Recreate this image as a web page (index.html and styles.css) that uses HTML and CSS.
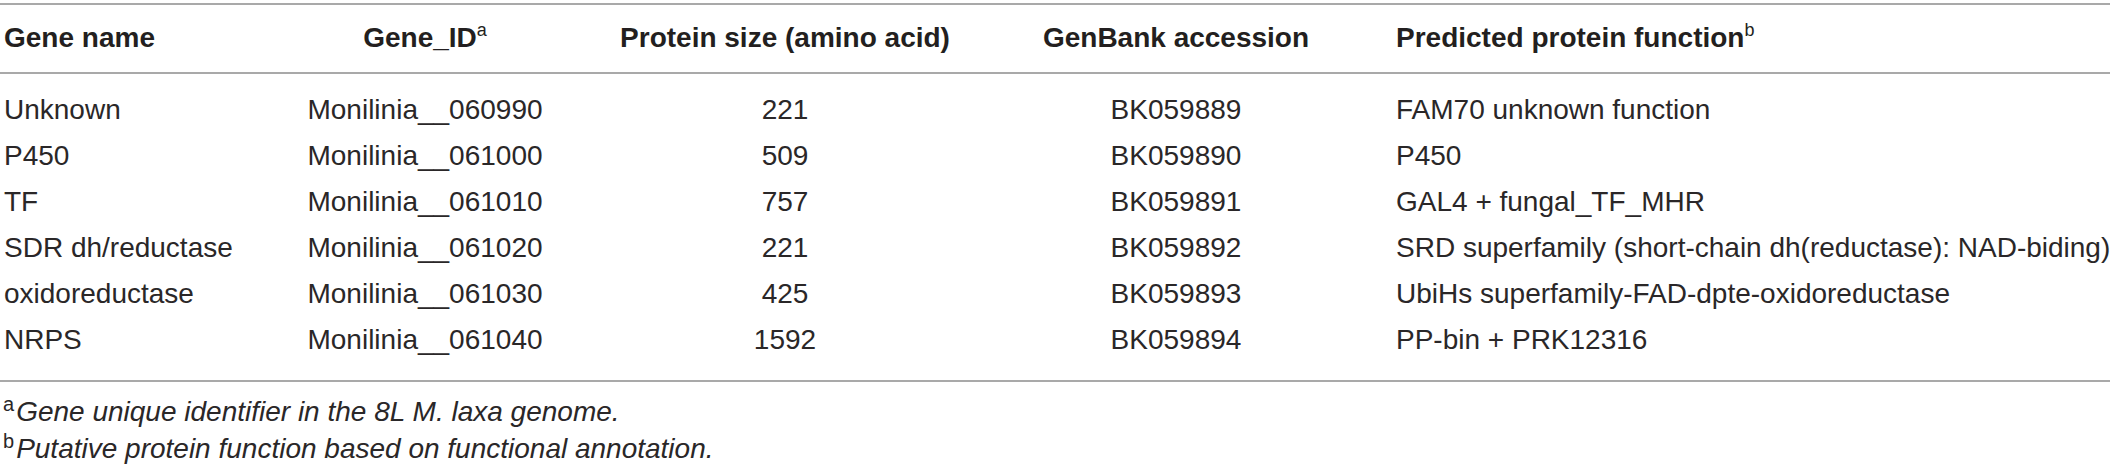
FILE: index.html
```html
<!DOCTYPE html>
<html>
<head>
<meta charset="utf-8">
<link rel="stylesheet" href="styles.css">
</head>
<body>
<div class="wrap">
<table class="gtable">
  <colgroup>
    <col class="c1"><col class="c2"><col class="c3"><col class="c4"><col class="c5">
  </colgroup>
  <thead>
    <tr>
      <th class="left">Gene name</th>
      <th>Gene_ID<sup>a</sup></th>
      <th>Protein size (amino acid)</th>
      <th>GenBank accession</th>
      <th class="left fn">Predicted protein function<sup>b</sup></th>
    </tr>
  </thead>
  <tbody>
    <tr><td class="left">Unknown</td><td>Monilinia__060990</td><td>221</td><td>BK059889</td><td class="left fn">FAM70 unknown function</td></tr>
    <tr><td class="left">P450</td><td>Monilinia__061000</td><td>509</td><td>BK059890</td><td class="left fn">P450</td></tr>
    <tr><td class="left">TF</td><td>Monilinia__061010</td><td>757</td><td>BK059891</td><td class="left fn">GAL4 + fungal_TF_MHR</td></tr>
    <tr><td class="left">SDR dh/reductase</td><td>Monilinia__061020</td><td>221</td><td>BK059892</td><td class="left fn">SRD superfamily (short-chain dh(reductase): NAD-biding)</td></tr>
    <tr><td class="left">oxidoreductase</td><td>Monilinia__061030</td><td>425</td><td>BK059893</td><td class="left fn">UbiHs superfamily-FAD-dpte-oxidoreductase</td></tr>
    <tr><td class="left">NRPS</td><td>Monilinia__061040</td><td>1592</td><td>BK059894</td><td class="left fn">PP-bin + PRK12316</td></tr>
  </tbody>
</table>
<div class="notes">
  <p><sup>a</sup>Gene unique identifier in the 8L M. laxa genome.</p>
  <p><sup>b</sup>Putative protein function based on functional annotation.</p>
</div>
</div>
</body>
</html>
```

FILE: styles.css
```css
html, body {
  margin: 0;
  padding: 0;
  background: #ffffff;
}
body {
  font-family: "Liberation Sans", Arial, sans-serif;
  color: #231f20;
}
.wrap {
  width: 2110px;
  padding-top: 3px;
}
.gtable {
  width: 2110px;
  border-collapse: collapse;
  table-layout: fixed;
  border-top: 2px solid #a9a9a9;
  border-bottom: 2px solid #a9a9a9;
}
.c1 { width: 240px; }
.c2 { width: 370px; }
.c3 { width: 350px; }
.c4 { width: 432px; }
.c5 { width: 718px; }
.gtable th {
  font-weight: bold;
  font-size: 28px;
  line-height: 30px;
  padding: 18px 0 19px 0;
  text-align: center;
  border-bottom: 2px solid #a9a9a9;
  white-space: nowrap;
}
.gtable td {
  font-size: 28px;
  line-height: 46px;
  padding: 0;
  text-align: center;
  white-space: nowrap;
  color: #2a2728;
}
.gtable tbody tr:first-child td { padding-top: 13px; }
.gtable tbody tr:last-child td { padding-bottom: 17px; }
.gtable .left { text-align: left; padding-left: 4px; }
.gtable .fn { padding-left: 4px; }
.gtable sup {
  font-size: 18px;
  font-weight: normal;
  line-height: 0;
  vertical-align: 11px;
}
.notes {
  padding-top: 11px;
}
.notes p {
  margin: 0;
  font-style: italic;
  font-size: 28px;
  line-height: 37px;
  padding-left: 3px;
  color: #2a2728;
}
.notes sup {
  font-size: 20px;
  line-height: 0;
  vertical-align: 10px;
  font-style: normal;
  margin-right: 2px;
}
```
